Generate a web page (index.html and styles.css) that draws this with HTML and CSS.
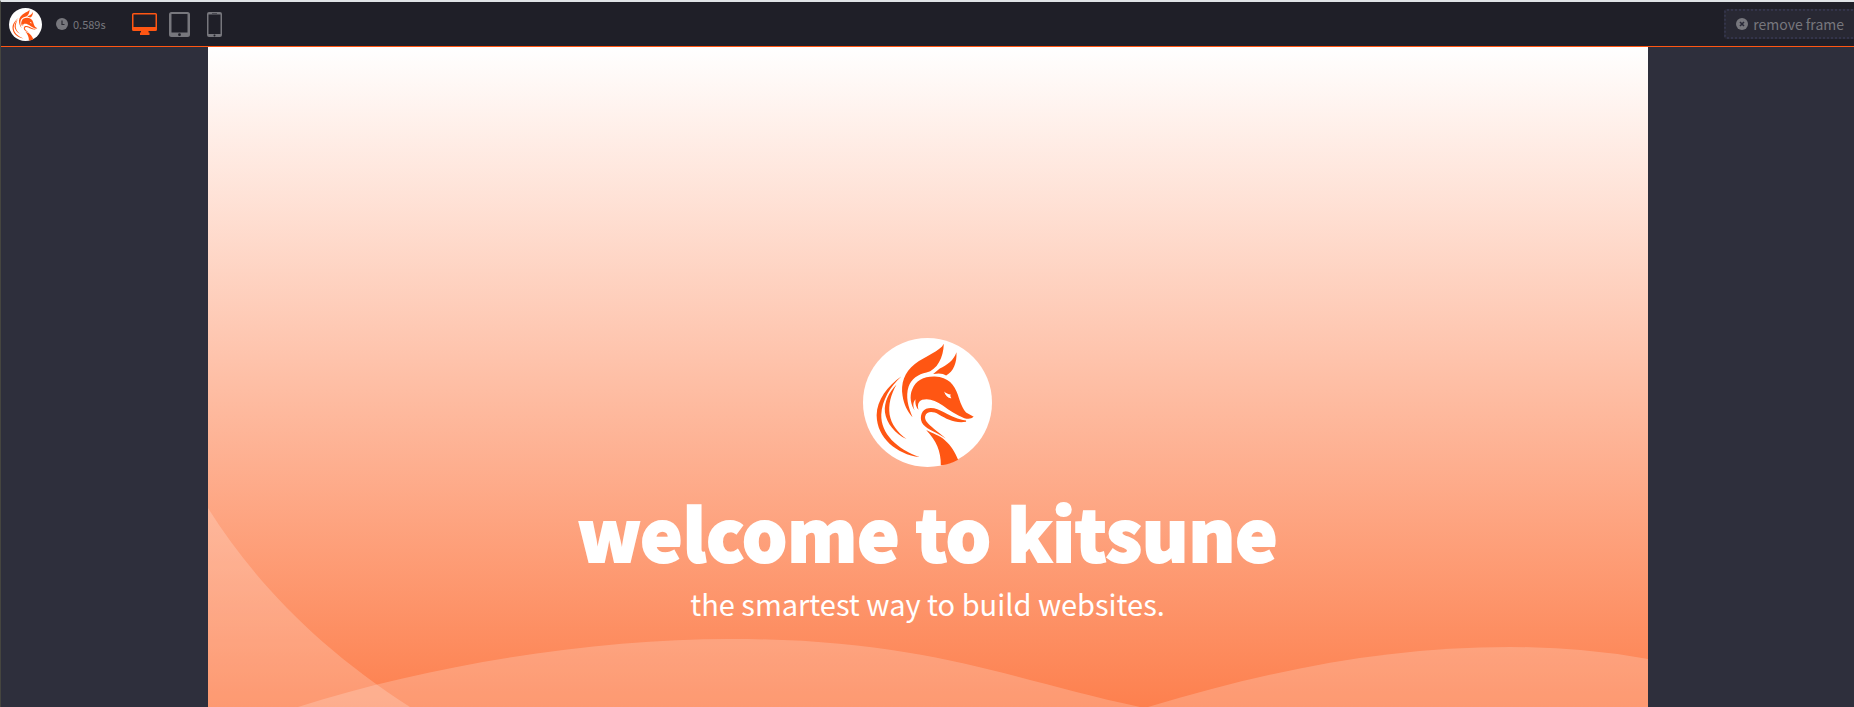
FILE: index.html
```html
<!DOCTYPE html>
<html lang="en">
<head>
<meta charset="utf-8">
<meta name="viewport" content="width=device-width, initial-scale=1">
<title>kitsune preview</title>
<link rel="stylesheet" href="styles.css">
</head>
<body>
<svg class="defs" aria-hidden="true">
  <symbol id="fox" viewBox="24 23 388 388">
    <circle cx="218" cy="217" r="194" fill="#fff"/>
    <g fill="#ff5613">
      <path d="M267 40C257 62 212 76 180 101C148 126 137 160 143 197C147 223 158 245 173 261C159 228 152 199 161 170C169 146 190 132 215 127C247 118 266 82 267 40Z"/>
      <path d="M305 66C297 91 276 105 255 115L235 131C253 128 265 129 274 136C296 124 307 97 305 66Z"/>
      <path d="M191 239C181 227 181 216 182 207C172 218 175 234 182 244C167 226 163 198 172 178C182 151 208 138 240 139C281 141 299 164 309 193C316 216 324 237 334 247L357 260C350 266 341 267 329 264C304 255 285 241 264 226C243 211 221 203 202 209C190 214 187 225 191 239ZM268 184C272 196 280 205 290 204C286 200 286 195 288 193C280 193 274 189 268 184Z" fill-rule="evenodd"/>
      <path d="M334 275C300 280 276 267 252 253C233 242 215 244 211 258C207 277 237 293 273 325C244 306 218 298 205 283C193 268 197 244 214 236C230 229 249 236 269 247C292 259 308 268 334 271Z"/>
      <path d="M140 138C106 168 81 211 79 253C77 310 126 357 194 381C125 372 66 324 65 255C66 209 98 167 140 138Z"/>
      <path d="M125 163C107 194 100 224 104 253C109 282 127 306 155 327C121 311 94 279 90 246C87 216 102 187 125 163Z"/>
      <path d="M214 300C235 311 254 316 271 331C289 346 300 365 310 389Q285 403 258 406C259 365 244 331 214 300Z"/>
    </g>
  </symbol>
</svg>

<header class="toolbar">
  <a class="brand" href="#" aria-label="kitsune"><svg class="brand-logo"><use href="#fox"/></svg></a>
  <div class="timer">
    <svg class="timer-icon" viewBox="0 0 12 12" aria-hidden="true"><circle cx="6" cy="6" r="6" fill="#77777d"/><path d="M6 2.5V6.5H8.5" fill="none" stroke="#2a2a33" stroke-width="1.2"/></svg>
    <span>0.589s</span>
  </div>
  <nav class="devices" aria-label="Preview size">
    <button class="device device-active" type="button" aria-label="Desktop">
      <svg width="25" height="22" viewBox="0 0 25 22"><path fill="currentColor" fill-rule="evenodd" d="M1.5 0H23.5Q25 0 25 1.5V16.500Q25 18 23.500 18H16.500V19.500H17.500V22H8V19.500H9V18H1.500Q0 18 0 16.500V1.500Q0 0 1.500 0ZM1.500 1.500V14H23.500V1.500Z"/></svg>
    </button>
    <button class="device" type="button" aria-label="Tablet">
      <svg width="21" height="25" viewBox="0 0 21 25"><path fill="currentColor" fill-rule="evenodd" d="M2.500 0H18.500Q21 0 21 2.500V22.500Q21 25 18.500 25H2.500Q0 25 0 22.500V2.500Q0 0 2.500 0ZM2.500 2V20.500H18.500V2ZM10.500 21.300A1.400 1.400 0 1 0 10.500 24.100A1.400 1.400 0 1 0 10.500 21.300Z"/></svg>
    </button>
    <button class="device" type="button" aria-label="Phone">
      <svg width="15" height="25" viewBox="0 0 15 25"><path fill="currentColor" fill-rule="evenodd" d="M2 0H13Q15 0 15 2V23Q15 25 13 25H2Q0 25 0 23V2Q0 0 2 0ZM1.500 2.500V22H13.500V2.500ZM5 1V1.600H10V1ZM7.500 22.500A1 1 0 1 0 7.500 24.500A1 1 0 1 0 7.500 22.500Z"/></svg>
    </button>
  </nav>
  <button class="remove" type="button">
    <svg class="timer-icon" viewBox="0 0 12 12" aria-hidden="true"><circle cx="6" cy="6" r="6" fill="#77777d"/><path d="M4 4L8 8M8 4L4 8" stroke="#2a2a38" stroke-width="1.600"/></svg>
    <span>remove frame</span>
  </button>
</header>

<main class="workspace">
  <section class="frame">
    <svg class="waves" viewBox="0 0 1440 200" preserveAspectRatio="none" aria-hidden="true">
      <g fill="#fff" fill-opacity=".2">
        <path d="M0 1C47 76 112 142 202 200H0Z"/>
        <path d="M90 200C225 157 387 132 522 132C720 132 802 173 932 200Z"/>
        <path d="M940 200C1066 162 1180 140 1302 140Q1375 140 1440 152V200Z"/>
      </g>
    </svg>
    <div class="hero">
      <svg class="hero-logo" role="img" aria-label="kitsune logo"><use href="#fox"/></svg>
      <h1 class="title">welcome to kitsune</h1>
      <p class="tagline">the smartest way to build websites.</p>
    </div>
  </section>
</main>
</body>
</html>
```

FILE: styles.css
```css
* {
  box-sizing: border-box;
}

body {
  margin: 0;
  min-height: 100vh;
  display: flex;
  flex-direction: column;
  border-top: 2px solid #dfe3e6;
  border-left: 1px solid #45453f;
  background: #2e2f3c;
  font-family: "Noto Sans CJK SC", "Noto Sans", sans-serif;
}

.defs {
  display: none;
}

.toolbar {
  display: flex;
  align-items: center;
  height: 45px;
  padding-left: 8px;
  background: #1f1f28;
  border-bottom: 1px solid #ff5613;
  color: #77777d;
}

.brand,
.brand-logo {
  display: block;
  width: 33px;
  height: 33px;
}

.timer {
  display: flex;
  align-items: center;
  gap: 5px;
  margin-left: 14px;
  font-size: 11px;
  line-height: 16px;
}

.timer-icon {
  width: 12px;
  height: 12px;
}

.devices {
  display: flex;
  align-items: center;
  gap: 12px;
  margin-left: 26px;
}

.device {
  display: flex;
  padding: 0;
  border: 0;
  background: none;
  color: #77777d;
}

.device + .device + .device {
  margin-left: 5px;
}

.device-active {
  color: #ff5613;
}

.remove {
  display: flex;
  align-items: center;
  gap: 5px;
  height: 30px;
  margin-left: auto;
  padding: 0 8px 0 10px;
  border: 2px dotted #33344a;
  border-right: 0;
  border-radius: 3px 0 0 3px;
  background: #282833;
  color: #77777d;
  font-family: inherit;
  font-size: 14px;
  line-height: 20px;
}

.remove span {
  padding-right: 2px;
}

.workspace {
  flex: 1;
  display: flex;
  justify-content: center;
}

.frame {
  position: relative;
  display: flex;
  flex-direction: column;
  justify-content: flex-end;
  width: 78%;
  max-width: 1440px;
  background: linear-gradient(#fff, #fd804e);
}

.waves {
  position: absolute;
  left: 0;
  bottom: 0;
  width: 100%;
  height: 200px;
}

.hero {
  position: relative;
  display: flex;
  flex-direction: column;
  align-items: center;
  padding-bottom: 83px;
  color: #fff;
  text-align: center;
}

.hero-logo {
  width: 129px;
  height: 129px;
}

.title {
  margin: 13px 0 0;
  font-size: 71px;
  font-weight: 900;
  line-height: 102px;
  -webkit-text-stroke: 2px #fff;
}

.tagline {
  margin: 0;
  font-size: 29px;
  font-weight: 400;
  line-height: 42px;
}
```
